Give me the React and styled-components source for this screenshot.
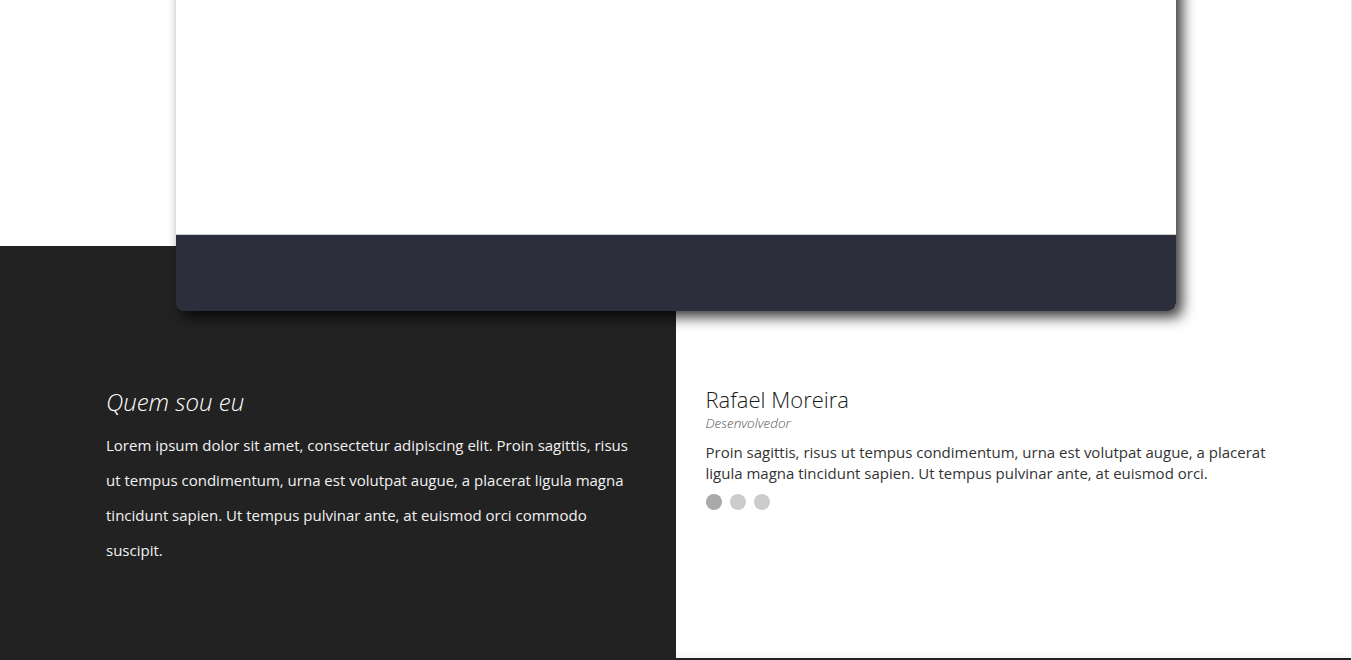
import React from "react";
import styled, { createGlobalStyle } from "styled-components";

const Global = createGlobalStyle`
  html, body { margin: 0; padding: 0; }
  body {
    background: #ffffff;
    font-family: "Open Sans", "Noto Sans", sans-serif;
    overflow: hidden;
  }
`;

const Page = styled.div`
  position: relative;
  width: 100%;
  height: 660px;
  overflow: hidden;
  border-right: 1px solid #e6e6e6;
  box-sizing: border-box;
  background: #fff;
`;

const Card = styled.div`
  position: relative;
  z-index: 2;
  width: 1000px;
  margin: -200px auto 0;
  border-radius: 0 0 8px 8px;
  box-shadow: 6px 6px 14px rgba(0, 0, 0, 0.8);
  display: flex;
  flex-direction: column;
`;

const CardBody = styled.div`
  height: 434px;
  background: #fff;
  border-bottom: 1px solid #c9cbd0;
`;

const CardFooter = styled.div`
  height: 76px;
  background: #2c2f3b;
  border-radius: 0 0 8px 8px;
`;

const Section = styled.div`
  display: flex;
  height: 412px;
  margin-top: -65px;
`;

const Column = styled.div`
  flex: 1 1 50%;
  box-sizing: border-box;
  padding-top: ${(p) => (p.$dark ? "141px" : "140px")};
  background: ${(p) => (p.$dark ? "#222222" : "#ffffff")};
  padding-left: ${(p) => (p.$dark ? "106px" : "30px")};
  box-shadow: ${(p) => (p.$dark ? "none" : "inset 0 -8px 8px -6px rgba(0,0,0,0.06)")};
`;

const AboutTitle = styled.h2`
  margin: 0 0 12px;
  font-size: 24px;
  line-height: 29px;
  font-weight: 300;
  font-style: italic;
  color: #ffffff;
`;

const AboutText = styled.p`
  margin: 0;
  max-width: 540px;
  font-size: 15px;
  line-height: 35px;
  color: #f2f2f2;
`;

const Name = styled.h3`
  margin: 0 0 2px;
  font-size: 22px;
  line-height: 26px;
  font-weight: 300;
  color: #1a1a1a;
`;

const Role = styled.div`
  font-size: 13.5px;
  line-height: 18px;
  font-style: italic;
  font-weight: 300;
  color: #555;
  margin-bottom: 10px;
`;

const Quote = styled.p`
  margin: 0 0 10px;
  max-width: 580px;
  font-size: 15px;
  line-height: 21px;
  color: #333;
`;

const Dots = styled.div`
  display: flex;
  gap: 8px;
`;

const Dot = styled.span`
  width: 16px;
  height: 16px;
  border-radius: 50%;
  background: ${(p) => (p.$active ? "#a9a9a9" : "#cccccc")};
`;

const Bottom = styled.div`
  height: 4px;
  background: #222;
`;

export default function App() {
  return (
    <>
      <Global />
      <Page>
        <Card>
          <CardBody />
          <CardFooter />
        </Card>
        <Section>
          <Column $dark>
            <AboutTitle>Quem sou eu</AboutTitle>
            <AboutText>
              Lorem ipsum dolor sit amet, consectetur adipiscing elit. Proin
              sagittis, risus ut tempus condimentum, urna est volutpat augue, a
              placerat ligula magna tincidunt sapien. Ut tempus pulvinar ante,
              at euismod orci commodo suscipit.
            </AboutText>
          </Column>
          <Column>
            <Name>Rafael Moreira</Name>
            <Role>Desenvolvedor</Role>
            <Quote>
              Proin sagittis, risus ut tempus condimentum, urna est volutpat
              augue, a placerat ligula magna tincidunt sapien. Ut tempus
              pulvinar ante, at euismod orci.
            </Quote>
            <Dots>
              <Dot $active />
              <Dot />
              <Dot />
            </Dots>
          </Column>
        </Section>
        <Bottom />
      </Page>
    </>
  );
}
